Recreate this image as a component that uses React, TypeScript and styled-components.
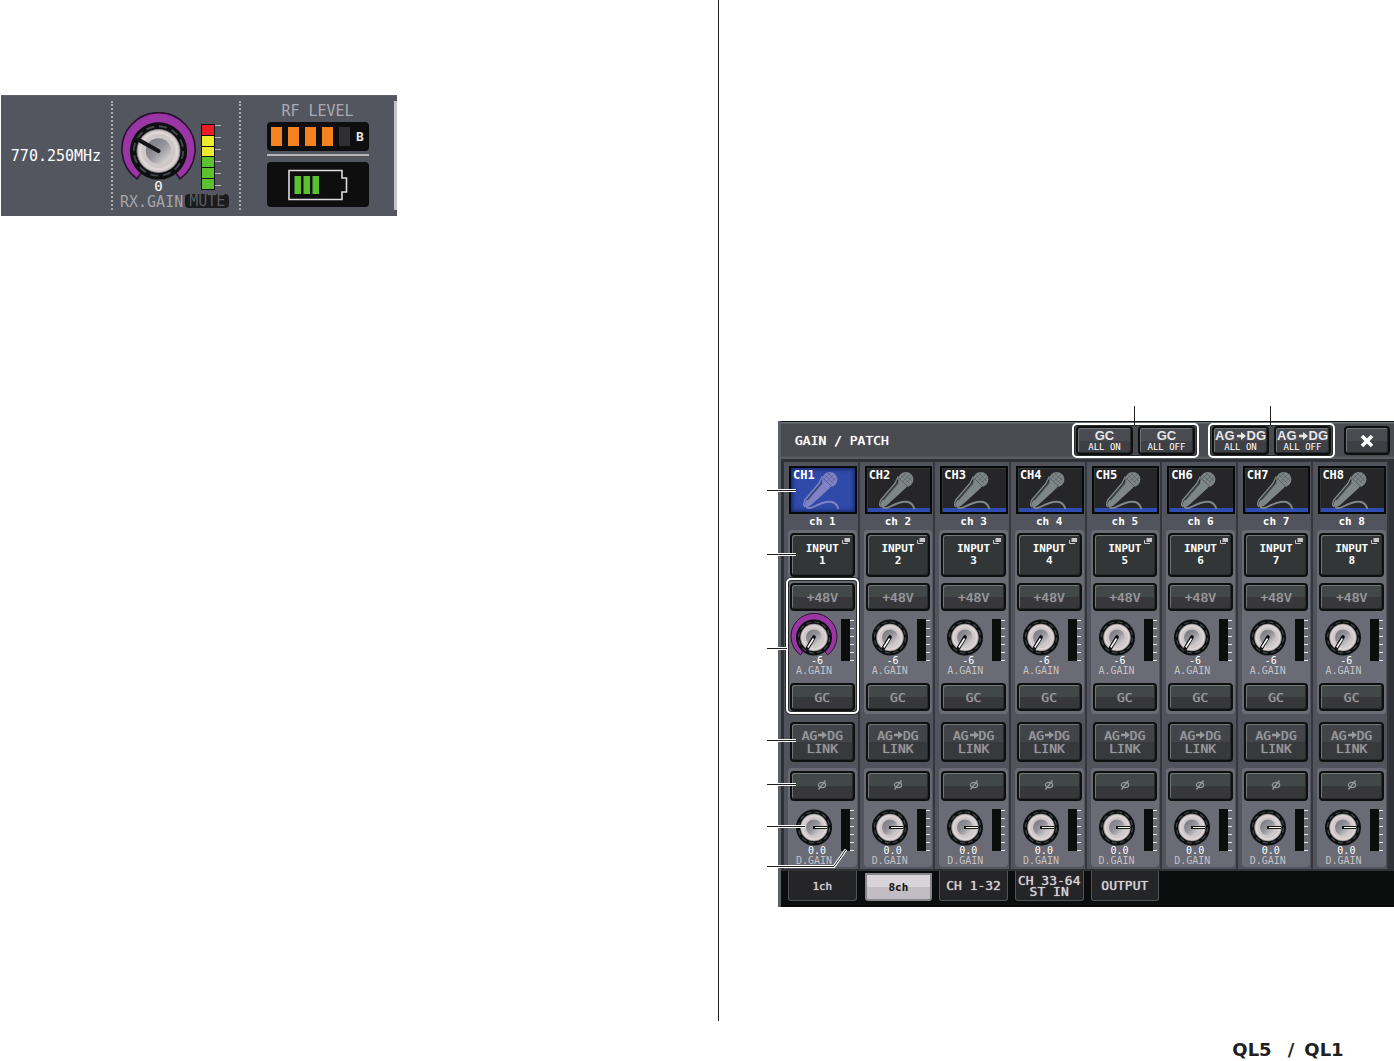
import React, { useId, useState } from "react";
import styled, { createGlobalStyle, css } from "styled-components";

const mono = `"DejaVu Sans Mono", "Liberation Mono", monospace`;
const sans = `"Liberation Sans", Arial, sans-serif`;

const GlobalStyle = createGlobalStyle`
  *, *::before, *::after { box-sizing: border-box; }
  body { margin: 0; background: #fff; font-family: ${mono}; }
  button { margin: 0; padding: 0; font: inherit; cursor: pointer; }
`;

/* ---------- page ---------- */

const Page = styled.div`
  min-height: 100vh;
  display: flex;
  flex-direction: column;
`;

const Spread = styled.main`
  flex: 1;
  display: grid;
  grid-template-columns: 719fr 675fr;
`;

const LeftPage = styled.section`
  padding: 95px 0 0 1px;
  border-right: 1px solid #231f20;
`;

const RightPage = styled.section`
  padding: 421px 0 0 59px;
`;

const Footer = styled.footer`
  height: 40px;
  padding: 0 43px 0 0;
  display: flex;
  justify-content: flex-end;
  align-items: flex-end;
`;

const Brand = styled.span`
  display: grid;
  grid-template-columns: 66px 12px 54px;
  justify-items: center;
  font: bold 18px/22px "DejaVu Sans", sans-serif;
  color: #231f20;
`;

/* ---------- knob ---------- */

const KnobBox = styled.div<{ $large?: boolean }>`
  position: relative;
  width: ${(p) => (p.$large ? 77 : 48)}px;
  height: ${(p) => (p.$large ? 70 : 44)}px;
  svg { display: block; width: 100%; height: 100%; }
`;

const KnobInput = styled.input`
  position: absolute;
  inset: 0;
  width: 100%;
  height: 100%;
  margin: 0;
  opacity: 0;
  cursor: pointer;
`;

type Pointer = "rx" | "analog" | "digital";

function Knob({ id, pointer, ring, large, value }: {
  id: string; pointer: Pointer; ring?: boolean; large?: boolean; value: number;
}) {
  const uid = useId();
  return (
    <KnobBox $large={large}>
      <svg viewBox="0 0 48 44" aria-hidden="true">
        <defs>
          <linearGradient id={uid} x1="0" y1="0" x2="1" y2="1">
            <stop offset="0" stopColor="#73737b" />
            <stop offset="0.5" stopColor="#96959b" />
            <stop offset="1" stopColor="#ece6e6" />
          </linearGradient>
        </defs>
        {ring && (
          <>
            <path d="M10.500 42 A23 23 0 1 1 37.500 42 L34 37 A16 16 0 1 0 14 37 Z" fill="#9a35a4" stroke="#2a1230" strokeWidth="1" />
          </>
        )}
        <circle cx="24" cy="24.500" r="18" fill="#0d0f10" />
        <circle cx="24" cy="24.500" r="15.500" fill="none" stroke="#41484b" strokeWidth="1.200" strokeDasharray="5 3.100" />
        <circle cx="24" cy="24.500" r="13.500" fill="#cfc8c9" stroke="#8f898c" strokeWidth="0.600" />
        <circle cx="24" cy="24.500" r="11.500" fill="none" stroke="#ddd5d6" strokeWidth="1.600" />
        <circle cx="24" cy="24.500" r="8" fill={`url(#${uid})`} />
        {pointer === "rx" && <path d="M24 24.500 L11.500 17.500" stroke="#141516" strokeWidth="2.600" strokeLinecap="round" />}
        {pointer === "analog" && (
          <>
            <path d="M24 24 L17.500 35" stroke="#0d0f10" strokeWidth="3.600" strokeLinecap="round" />
            <path d="M23.500 25.500 L17.800 34.500" stroke="#fff" strokeWidth="1.500" />
          </>
        )}
        {pointer === "digital" && (
          <>
            <path d="M23 24.500 H37.500" stroke="#14180f" strokeWidth="3" />
            <path d="M25 24.500 H37" stroke="#fff" strokeWidth="1" />
          </>
        )}
      </svg>
      <KnobInput id={id} type="range" min={-20} max={40} defaultValue={value} />
    </KnobBox>
  );
}

/* ---------- receiver strip ---------- */

const Receiver = styled.div`
  width: 396px;
  max-width: 100%;
  height: 121px;
  padding: 5px 0 6px;
  display: grid;
  grid-template-columns: 110px 130px 1fr 3px;
  background: #53565e;
  border-top: 1px solid #5f6168;
`;

const Frequency = styled.div`
  display: flex;
  align-items: center;
  justify-content: center;
  font-size: 15px;
  color: #fff;
`;

const RxCell = styled.div`
  border: dotted #a9a9ad;
  border-width: 0 2px;
  padding: 11px 0 0 7px;
`;

const RxTop = styled.div`
  height: 82px;
  display: flex;
  gap: 4px;
`;

const RxValue = styled.output`
  display: block;
  text-align: center;
  font-size: 14px;
  line-height: 8px;
  color: #fff;
`;

const RxMeter = styled.div`
  width: 14px;
  height: 66px;
  margin-top: 12px;
  padding: 1px;
  display: flex;
  flex-direction: column;
  gap: 1px;
  background: #101010;
`;

const RxLed = styled.i<{ $color: string }>`
  flex: 1;
  background: ${(p) => p.$color};
`;

const RxTicks = styled.i`
  width: 6px;
  height: 64px;
  margin: 13px 0 0 -4px;
  background: repeating-linear-gradient(#b5b3b7 0 1px, transparent 1px 12px);
`;

const RxBottom = styled.div`
  display: flex;
  gap: 2px;
  line-height: 16px;
  font-size: 15px;
`;

const RxLabel = styled.label`
  color: #a5a5aa;
`;

const Mute = styled.span`
  height: 14px;
  padding: 0 4px;
  border-radius: 4px;
  background: #1b1c1e;
  color: #5a5b5f;
  line-height: 15px;
`;

const RfCell = styled.div`
  display: flex;
  flex-direction: column;
  align-items: center;
`;

const RfTitle = styled.div`
  font-size: 15px;
  line-height: 21px;
  color: #aaaaae;
`;

const BlackBox = styled.div<{ $h: number }>`
  width: 102px;
  height: ${(p) => p.$h}px;
  border-radius: 4px;
  background: #0e0e0f;
  display: flex;
  align-items: center;
  justify-content: center;
`;

const RfBars = styled(BlackBox)`
  gap: 6px;
  font: bold 13px/16px ${mono};
  color: #e6e2e4;
`;

const RfBar = styled.i<{ $on: boolean }>`
  width: 11px;
  height: 19px;
  background: ${(p) => (p.$on ? "#f58220" : "#303032")};
`;

const RfRule = styled.div`
  width: 102px;
  height: 2px;
  margin: 3px 0 6px;
  background: #b9b5b9;
`;

const ReceiverEdge = styled.div`
  background: #c9c1c8;
`;

/* ---------- console ---------- */

const Console = styled.div`
  position: relative;
  background: #0c0d0d;
  border-left: 3px solid #5d5f68;
`;

const TitleBar = styled.header`
  height: 38px;
  padding: 0 4px 0 14px;
  display: flex;
  align-items: center;
  border-top: 1px solid #111214;
  background: linear-gradient(#6b7478 0 1px, #4a4b50 2px 34px, #5a5c63 35px);
`;

const Title = styled.h1`
  flex: 1;
  margin: 0;
  font: normal 13px/16px ${mono};
  color: #fff;
  text-shadow: 0 0 1px #fff;
`;

const bevel = css`
  border: 2px solid #0e1010;
  border-radius: 4px;
  box-shadow: inset 1px 1px 0 #72767a, inset -1px -1px 0 #27292b;
`;

const ButtonPair = styled.div`
  position: relative;
  height: 35px;
  margin-right: 9px;
  padding: 0 2px;
  display: flex;
  align-items: center;
  gap: 5px;
  border: 2px solid #fff;
  border-radius: 5px;
  box-shadow: 0 0 0 1px #2b2b2e inset;
  &::before {
    content: "";
    position: absolute;
    left: 60px;
    bottom: 100%;
    width: 1px;
    height: 19px;
    background: #231f20;
  }
`;

const HeadButton = styled.button<{ $w: number }>`
  ${bevel}
  width: ${(p) => p.$w}px;
  height: 29px;
  display: flex;
  flex-direction: column;
  align-items: center;
  justify-content: center;
  background: linear-gradient(#4a4b51 50%, #3f4045 50%);
  color: #fff;
`;

const HeadMain = styled.span`
  display: flex;
  align-items: center;
  gap: 1px;
  font: bold 13px/12px ${sans};
  color: #e8e6e9;
`;

const HeadSub = styled.span`
  font-size: 9px;
  line-height: 10px;
  white-space: nowrap;
`;

const Strips = styled.div`
  padding: 3px 5px 2px 3px;
  display: grid;
  grid-template-columns: repeat(8, 1fr);
  background: #303136;
`;

const Strip = styled.section`
  min-width: 0;
  padding: 4px 1px 2px 4px;
  border-right: 2px solid #36373d;
  display: flex;
  flex-direction: column;
  background: #52545d;
`;

const ChannelTile = styled.button<{ $active: boolean }>`
  position: relative;
  height: 48px;
  margin-left: 1px;
  border: 2px solid #08090a;
  background: ${(p) =>
    p.$active ? "#2f4aa8" : "linear-gradient(#262628 0 40px, #2f4cb0 40px)"};
  box-shadow: ${(p) => (p.$active ? "inset 0 0 4px 1px #12235f" : "inset 1px 1px 0 #34383a")};
  color: ${(p) => (p.$active ? "#8182c6" : "#7e8687")};
  svg { display: block; width: 100%; height: 44px; }
`;

const ChannelId = styled.span`
  position: absolute;
  left: 2px;
  top: 1px;
  font: bold 12px/13px ${mono};
  color: #fff;
`;

const ChannelName = styled.div`
  height: 16px;
  text-align: center;
  font: bold 11px/15px ${mono};
  color: #fff;
`;

const Panel = styled.div`
  padding: 3px 2px 3px;
  border-radius: 4px;
  display: flex;
  flex-direction: column;
  background: #6a6b75;
`;

const PatchButton = styled.button`
  ${bevel}
  position: relative;
  height: 44px;
  margin-bottom: 6px;
  background: #323636;
  color: #fff;
  font: bold 11px/12px "DejaVu Sans Mono", monospace;
  text-align: center;
  svg { position: absolute; top: 3px; right: 3px; }
`;

const GainGroup = styled.div<{ $marked: boolean }>`
  position: relative;
  display: flex;
  flex-direction: column;
  ${(p) =>
    p.$marked &&
    css`
      &::after {
        content: "";
        position: absolute;
        inset: -5px -4px -3px;
        border: 2px solid #fff;
        border-radius: 5px;
        box-shadow: inset 0 0 0 1px #2b2b2e, 0 0 0 1px #2b2b2e;
        pointer-events: none;
      }
    `}
`;

const StripButton = styled.button<{ $h: number; $plain?: boolean }>`
  ${bevel}
  height: ${(p) => p.$h}px;
  background: ${(p) =>
    p.$plain ? "linear-gradient(#434449 50%, #38393d 50%)" : "linear-gradient(#424848 50%, #38383c 50%)"};
  color: #97989b;
  font-size: 13px;
  line-height: 13px;
  text-shadow: 0 0 1px #97989b;
  svg { vertical-align: 1px; }
`;

const LinkButton = styled(StripButton)`
  margin: 8px 2px 6px;
`;

const GainArea = styled.div<{ $h: number }>`
  height: ${(p) => p.$h}px;
  display: flex;
  gap: 3px;
`;

const GainKnob = styled.div`
  width: 48px;
  padding-top: 2px;
`;

const GainValue = styled.output`
  display: block;
  padding-left: 6px;
  text-align: center;
  font-size: 10px;
  line-height: 8px;
  color: #fff;
`;

const GainLabel = styled.label`
  display: block;
  padding-left: 6px;
  font-size: 10px;
  line-height: 12px;
  color: #c4c2c6;
  white-space: nowrap;
`;

const Meter = styled.div`
  width: 13px;
  height: 42px;
  margin-top: 8px;
  background:
    linear-gradient(#0c0d0d, #0c0d0d) 0 0 / 9px 100% no-repeat,
    repeating-linear-gradient(transparent 0 1px, #e9e7ea 1px 2px, transparent 2px 8px);
`;

const TabBar = styled.nav`
  height: 36px;
  padding: 0 5px 6px 3px;
  display: grid;
  grid-template-columns: repeat(8, 1fr);
`;

const Tab = styled.button<{ $active: boolean }>`
  margin: ${(p) => (p.$active ? "2px 3px 0 5px" : "0 3px 0 4px")};
  border: 1px solid #505256;
  border-top: 0;
  border-radius: 0 0 3px 3px;
  background: #252527;
  color: #d5d2d5;
  text-shadow: 0 0 1px #d5d2d5;
  font-size: 13px;
  line-height: 11px;
  white-space: pre;
  ${(p) =>
    p.$active &&
    css`
      border: 2px solid #85858a;
      background: linear-gradient(#d8d4d9 50%, #c2bcc3 50%);
      color: #111;
      text-shadow: none;
      font-weight: bold;
    `}
`;

const TabText = styled.span<{ $small: boolean }>`
  font-size: ${(p) => (p.$small ? 11 : 13)}px;
`;

const Callouts = styled.svg`
  position: absolute;
  left: -14px;
  top: 0;
  pointer-events: none;
`;

/* ---------- drawings ---------- */

const Arrow = () => (
  <svg width="10" height="8" viewBox="0 0 10 8" aria-hidden="true">
    <path d="M1 2.700H5V0L10 4L5 8V5.300H1Z" fill="currentColor" />
  </svg>
);

const Mic = () => (
  <svg viewBox="0 0 63 44" aria-hidden="true" fill="none" stroke="currentColor">
    <path d="M31.500 13 L39 19.500 L21 36 Q17 40 14.500 39 Q12 37 14.500 33 Z" fill="currentColor" stroke="none" />
    <path d="M31 8.500 L27.500 15.500 L13.500 32 Q11 37 14 39" strokeWidth="1.400" />
    <path d="M31 14.500 L16 32" stroke="#1d2228" strokeOpacity="0.600" strokeWidth="1.200" />
    <circle cx="38.500" cy="11.500" r="7.600" fill="currentColor" stroke="none" />
    <path d="M33 6.500 l9 9 M36 4.500 l8.500 8.500 M39 4.500 l-7 7 M43 6 l-7 7 M45 9 l-5 5" stroke="#1d2228" strokeOpacity="0.350" strokeWidth="0.800" />
    <path d="M32 10.500 L40.500 18.500" stroke="#1d2228" strokeOpacity="0.500" strokeWidth="0.800" />
    <path d="M15 39 Q18 41.500 23 38.500 Q34 32.500 41 34 Q46 36 47 41" strokeWidth="1.900" />
  </svg>
);

const PopupIcon = () => (
  <svg width="8" height="6" viewBox="0 0 8 6" aria-hidden="true">
    <path d="M2.500 0H8V4H2.500Z" fill="#cbc5ca" />
    <path d="M0.500 2V5.500H6" fill="none" stroke="#cbc5ca" />
  </svg>
);

const Phase = () => (
  <svg width="10" height="10" viewBox="0 0 10 10" fill="none" stroke="#97989b" strokeWidth="1.300" aria-hidden="true">
    <ellipse cx="5" cy="5" rx="3.600" ry="2.600" />
    <path d="M1.500 9.500 L8.500 0.500" />
  </svg>
);

const Cross = () => (
  <svg width="14" height="14" viewBox="0 0 14 14" aria-hidden="true">
    <path d="M2 2 L12 12 M12 2 L2 12" stroke="#fff" strokeWidth="3.600" />
  </svg>
);

const Battery = () => (
  <svg width="60" height="32" viewBox="0 0 60 32" aria-hidden="true">
    <path d="M1 1.500H54V9H58.500V23H54V30.500H1Z" fill="none" stroke="#e0dadd" strokeWidth="1.600" />
    <path d="M6.500 7h6.500v18H6.500Z M15.500 7h6.500v18H15.500Z M24.500 7h6.500v18H24.500Z" fill="#5cc12f" />
  </svg>
);

const leaders = ["M0 69H29", "M0 133H29", "M0 227H20", "M0 319H29", "M0 363H29", "M0 405H38", "M0 445H67L79 428"];

/* ---------- composition ---------- */

const leds = ["#ee1c25", "#ecec2c", "#ecec2c", "#5cc12f", "#5cc12f", "#5cc12f"];
const channels = [1, 2, 3, 4, 5, 6, 7, 8];
const tabs = ["1ch", "8ch", "CH 1-32", "CH 33-64\nST IN", "OUTPUT"];

function ReceiverStrip() {
  return (
    <Receiver>
      <Frequency>770.250MHz</Frequency>
      <RxCell>
        <RxTop>
          <div>
            <Knob id="rx-gain" pointer="rx" ring large value={0} />
            <RxValue>0</RxValue>
          </div>
          <RxMeter>{leds.map((c, i) => <RxLed key={i} $color={c} />)}</RxMeter>
          <RxTicks />
        </RxTop>
        <RxBottom>
          <RxLabel htmlFor="rx-gain">RX.GAIN</RxLabel>
          <Mute>MUTE</Mute>
        </RxBottom>
      </RxCell>
      <RfCell>
        <RfTitle>RF LEVEL</RfTitle>
        <RfBars $h={29}>
          {[1, 2, 3, 4, 5].map((n) => <RfBar key={n} $on={n < 5} />)}
          B
        </RfBars>
        <RfRule />
        <BlackBox $h={45}><Battery /></BlackBox>
      </RfCell>
      <ReceiverEdge />
    </Receiver>
  );
}

function Gain({ id, label, value, pointer, ring, height }: {
  id: string; label: string; value: string; pointer: Pointer; ring?: boolean; height: number;
}) {
  return (
    <GainArea $h={height}>
      <GainKnob>
        <Knob id={id} pointer={pointer} ring={ring} value={Number(value)} />
        <GainValue>{value}</GainValue>
        <GainLabel htmlFor={id}>{label}</GainLabel>
      </GainKnob>
      <Meter />
    </GainArea>
  );
}

function ChannelStrip({ n, active, onSelect }: { n: number; active: boolean; onSelect: () => void }) {
  return (
    <Strip>
      <ChannelTile $active={active} onClick={onSelect}>
        <ChannelId>CH{n}</ChannelId>
        <Mic />
      </ChannelTile>
      <ChannelName>ch {n}</ChannelName>
      <Panel>
        <PatchButton>INPUT<br />{n}<PopupIcon /></PatchButton>
        <GainGroup $marked={n === 1}>
          <StripButton $h={28}>+48V</StripButton>
          <Gain id={`again-${n}`} label="A.GAIN" value="-6" pointer="analog" ring={active} height={72} />
          <StripButton $h={28}>GC</StripButton>
        </GainGroup>
      </Panel>
      <LinkButton $h={40} $plain>AG<Arrow />DG<br />LINK</LinkButton>
      <Panel>
        <StripButton $h={30} aria-label="Phase"><Phase /></StripButton>
        <Gain id={`dgain-${n}`} label="D.GAIN" value="0.0" pointer="digital" height={63} />
      </Panel>
    </Strip>
  );
}

export default function App() {
  const [channel, setChannel] = useState(1);
  const [tab, setTab] = useState(1);
  return (
    <Page>
      <GlobalStyle />
      <Spread>
        <LeftPage>
          <ReceiverStrip />
        </LeftPage>
        <RightPage>
          <Console>
            <TitleBar>
              <Title>GAIN / PATCH</Title>
              <ButtonPair>
                <HeadButton $w={57}><HeadMain>GC</HeadMain><HeadSub>ALL ON</HeadSub></HeadButton>
                <HeadButton $w={57}><HeadMain>GC</HeadMain><HeadSub>ALL OFF</HeadSub></HeadButton>
              </ButtonPair>
              <ButtonPair>
                <HeadButton $w={57}><HeadMain>AG<Arrow />DG</HeadMain><HeadSub>ALL ON</HeadSub></HeadButton>
                <HeadButton $w={57}><HeadMain>AG<Arrow />DG</HeadMain><HeadSub>ALL OFF</HeadSub></HeadButton>
              </ButtonPair>
              <HeadButton $w={46} aria-label="Close"><Cross /></HeadButton>
            </TitleBar>
            <Strips>
              {channels.map((n) => (
                <ChannelStrip key={n} n={n} active={n === channel} onSelect={() => setChannel(n)} />
              ))}
            </Strips>
            <TabBar>
              {tabs.map((t, i) => (
                <Tab key={t} $active={i === tab} onClick={() => setTab(i)}>
                  <TabText $small={t.length === 3}>{t}</TabText>
                </Tab>
              ))}
            </TabBar>
            <Callouts width="90" height="486" viewBox="0 0 90 486" fill="none" aria-hidden="true">
              {leaders.map((d) => (
                <g key={d}>
                  <path d={d} stroke="#fff" strokeWidth="3" transform="translate(0 .5)" />
                  <path d={d} stroke="#231f20" strokeWidth="1" transform="translate(0 .5)" />
                </g>
              ))}
            </Callouts>
          </Console>
        </RightPage>
      </Spread>
      <Footer>
        <Brand><span>QL5</span><span>/</span><span>QL1</span></Brand>
      </Footer>
    </Page>
  );
}
